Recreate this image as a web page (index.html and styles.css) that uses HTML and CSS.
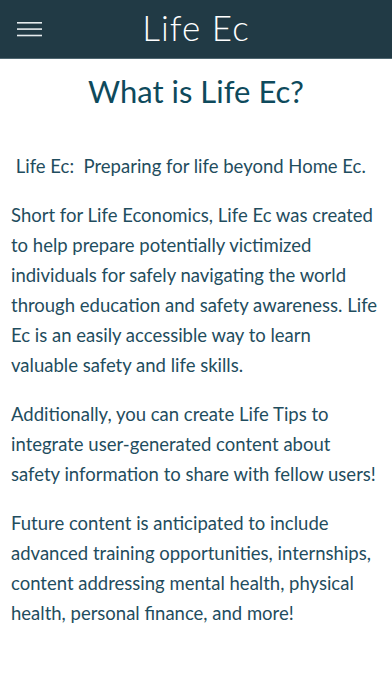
FILE: index.html
```html
<!DOCTYPE html>
<html lang="en">
<head>
<meta charset="utf-8">
<title>Life Ec</title>
<link rel="stylesheet" href="styles.css">
</head>
<body>
<header class="topbar">
  <button class="menu" aria-label="Menu">
    <svg width="26" height="16" viewBox="0 0 26 16">
      <rect x="0" y="0" width="25" height="1.6" fill="#e6ecee"/>
      <rect x="0" y="6.3" width="25" height="1.6" fill="#e6ecee"/>
      <rect x="0" y="12.7" width="25" height="1.6" fill="#e6ecee"/>
    </svg>
  </button>
  <div class="brand">Life Ec</div>
</header>
<main class="content">
  <h1 class="title">What is Life Ec?</h1>
  <p class="para">&nbsp;Life Ec:&nbsp; Preparing for life beyond Home Ec.</p>
  <p class="para">Short for Life Economics, Life Ec was created to help prepare potentially victimized individuals for safely navigating the world through education and safety awareness. Life Ec is an easily accessible way to learn valuable safety and life skills.</p>
  <p class="para">Additionally, you can create Life Tips to integrate user-generated content about safety information to share with fellow users!</p>
  <p class="para">Future content is anticipated to include advanced training opportunities, internships, content addressing mental health, physical health, personal finance, and more!</p>
</main>
</body>
</html>
```

FILE: styles.css
```css
* { box-sizing: border-box; }
html, body { margin: 0; padding: 0; background: #ffffff; }
body { font-family: Lato, "Liberation Sans", sans-serif; }

.topbar {
  height: 59px;
  background: #213a45;
  border-bottom: 1px solid #4f6670;
  display: flex;
  align-items: center;
  justify-content: center;
  position: relative;
}
.menu {
  position: absolute;
  left: 17px;
  top: 22px;
  padding: 0;
  margin: 0;
  border: 0;
  background: none;
  display: flex;
}
.brand {
  color: #ffffff;
  font-family: Lato, "Open Sans", sans-serif;
  font-weight: 300;
  font-size: 35px;
  letter-spacing: 1px;
  line-height: 1;
  margin-top: -3px;
}

.content {
  padding: 0 11px 40px 11px;
  color: #1f4d5e;
}
.title {
  margin: 12px 0 0 0;
  text-align: center;
  color: #0e4a5c;
  font-weight: 400;
  font-size: 31px;
  line-height: 40px;
}
.para {
  margin: 40px 0 0 0;
  font-size: 18.5px;
  line-height: 30px;
}
.para + .para { margin-top: 19px; }
```
